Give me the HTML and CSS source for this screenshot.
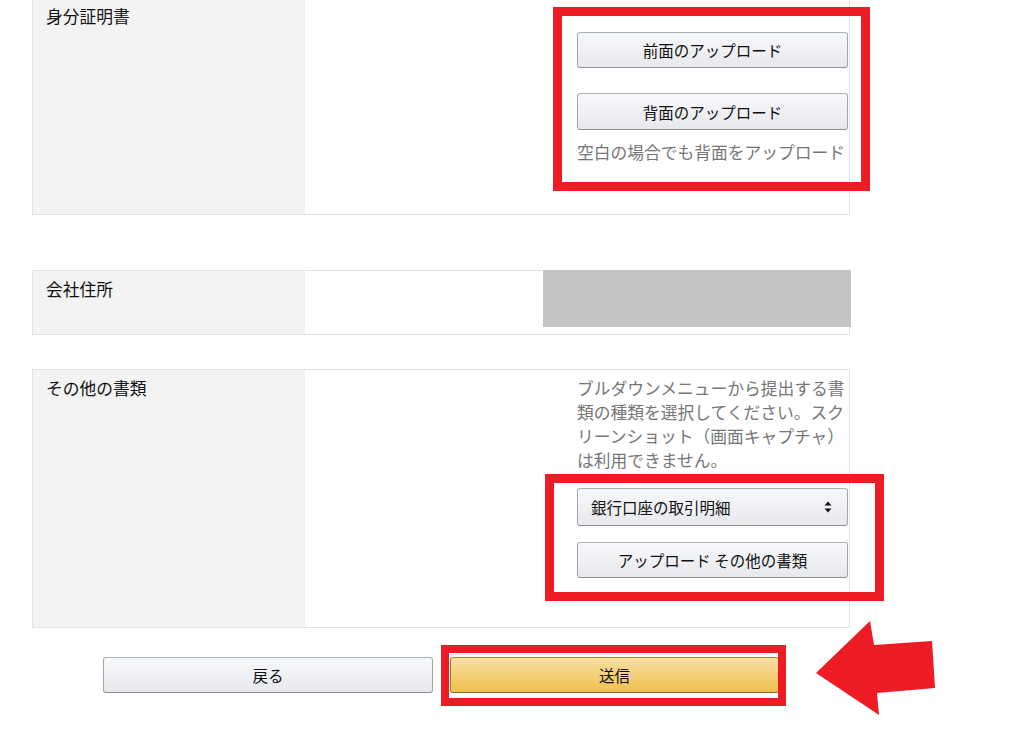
FILE: index.html
```html
<!DOCTYPE html>
<html lang="ja">
<head>
<meta charset="utf-8">
<title>書類のアップロード</title>
<link rel="stylesheet" href="styles.css">
</head>
<body>
<div class="page">
  <section class="panel panel-id">
    <div class="label">身分証明書</div>
    <div class="spacer"></div>
    <div class="field field-id">
      <button class="btn" type="button">前面のアップロード</button>
      <button class="btn btn-second" type="button">背面のアップロード</button>
      <p class="hint hint-id">空白の場合でも背面をアップロード</p>
    </div>
  </section>

  <section class="panel panel-address">
    <div class="label">会社住所</div>
    <div class="spacer"></div>
    <div class="field field-address"></div>
    <div class="redact"></div>
  </section>

  <section class="panel panel-other">
    <div class="label">その他の書類</div>
    <div class="spacer"></div>
    <div class="field field-other">
      <p class="hint">ブルダウンメニューから提出する書類の種類を選択してください。スクリーンショット（画面キャプチャ）は利用できません。</p>
      <div class="select">
        <span>銀行口座の取引明細</span>
        <svg class="select-icon" width="8" height="12" viewBox="0 0 8 12"><path d="M4 0.5 L7.5 4.5 H0.5 Z M4 11.5 L0.5 7.5 H7.5 Z" fill="#111"/></svg>
      </div>
      <button class="btn btn-other" type="button">アップロード その他の書類</button>
    </div>
  </section>

  <div class="actions">
    <button class="btn btn-back" type="button">戻る</button>
    <button class="btn btn-submit" type="button">送信</button>
  </div>

  <div class="mark mark-1"></div>
  <div class="mark mark-2"></div>
  <div class="mark mark-3"></div>
  <svg class="arrow" width="1024" height="729" viewBox="0 0 1024 729">
    <polygon points="816,673 870,621 874,645 932,641 935,688 877,693 879,715" fill="#ed1c24"/>
  </svg>
</div>
</body>
</html>
```

FILE: styles.css
```css
html, body {
  margin: 0;
  padding: 0;
  background: #fff;
}

body {
  font-family: "Noto Sans CJK JP", "Noto Sans", sans-serif;
  color: #111;
  overflow: hidden;
  height: 729px;
}

.page {
  position: relative;
  display: flex;
  flex-direction: column;
  padding-left: 32px;
  width: 818px;
}

.panel {
  position: relative;
  display: grid;
  grid-template-columns: 272px 272px 272px;
  border: 1px solid #e3e3e3;
  font-size: 16.75px;
  line-height: 24px;
}

.panel-id {
  margin-top: -3px;
}

.panel-address {
  margin-top: 55px;
}

.panel-other {
  margin-top: 34px;
}

.label {
  background: #f3f3f3;
  padding: 6px 14px 0 13px;
  color: #111;
}

.field {
  display: flex;
  flex-direction: column;
  padding-top: 6px;
}

.field-id {
  padding-top: 34px;
  padding-bottom: 50px;
}

.field-address {
  height: 57px;
}

.field-other {
  padding-bottom: 49px;
}

.hint {
  margin: 0;
  color: #767676;
  width: 272px;
}

.hint-id {
  margin-top: 10px;
}

.btn {
  display: block;
  box-sizing: border-box;
  width: 271px;
  height: 36px;
  margin: 0;
  padding: 0;
  font-family: "Noto Sans CJK JP", "Noto Sans", sans-serif;
  font-size: 15.5px;
  color: #111;
  background: linear-gradient(to bottom, #f7f8fa, #e7e9ec);
  border: 1px solid;
  border-color: #adb1b8 #a2a6ac #8d9096;
  border-radius: 3px;
}

.btn-second {
  margin-top: 25px;
  height: 37px;
}

.select {
  box-sizing: border-box;
  width: 271px;
  height: 38px;
  margin-top: 16px;
  padding: 0 13px 0 13px;
  display: flex;
  align-items: center;
  justify-content: space-between;
  font-size: 15.5px;
  color: #111;
  background: linear-gradient(to bottom, #f7f8fa, #e7e9ec);
  border: 1px solid;
  border-color: #adb1b8 #a2a6ac #8d9096;
  border-radius: 3px;
}

.select-icon {
  margin-right: 2px;
}

.btn-other {
  margin-top: 16px;
}

.redact {
  position: absolute;
  left: 510px;
  top: -1px;
  width: 308px;
  height: 57px;
  background: #c4c4c4;
}

.actions {
  display: flex;
  justify-content: center;
  gap: 17px;
  margin-top: 29px;
}

.btn-back {
  width: 330px;
}

.btn-submit {
  width: 329px;
  background: linear-gradient(to bottom, #f7dfa5, #f0c14b);
  border-color: #a88734 #9c7e31 #846a29;
}

.mark {
  position: absolute;
  box-sizing: border-box;
  border: 9px solid #ed1c24;
}

.mark-1 {
  left: 553px;
  top: 7px;
  width: 317px;
  height: 184px;
}

.mark-2 {
  left: 545px;
  top: 474px;
  width: 339px;
  height: 127px;
}

.mark-3 {
  left: 441px;
  top: 645px;
  width: 345px;
  height: 61px;
  border-width: 8px;
}

.arrow {
  position: absolute;
  left: 0;
  top: 0;
  pointer-events: none;
}
```
